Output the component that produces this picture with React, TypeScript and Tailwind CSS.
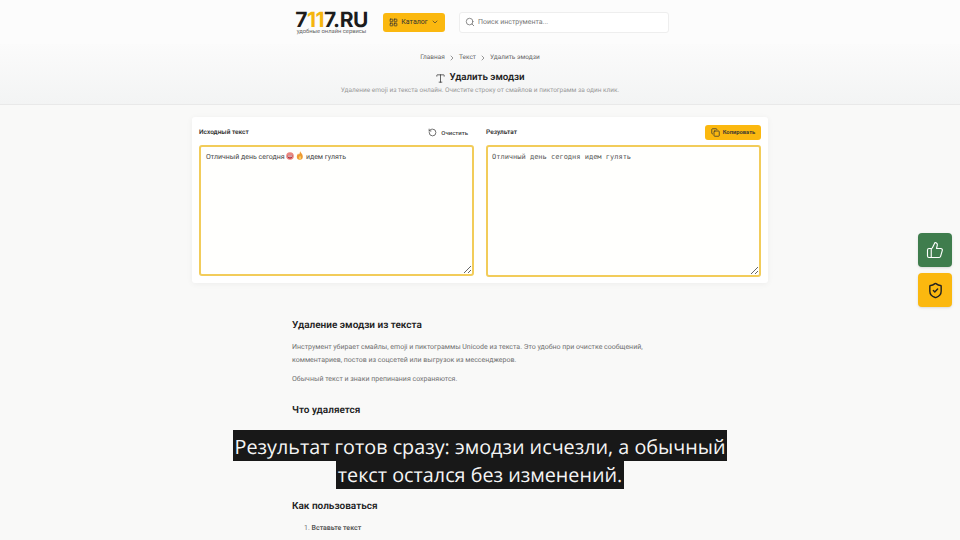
import { ChevronDown, ChevronRight, Copy, LayoutGrid, RotateCcw, Search, ShieldCheck, ThumbsUp, Type } from 'lucide-react';

const crumbs = ["Главная", "Текст", "Удалить эмодзи"];

function FaceEmoji() {
    return (
        <svg width="8" height="8" viewBox="0 0 20 20" className="inline-block align-[-1px]">
            <circle cx="10" cy="10" r="9.5" fill="#e9867f" />
            <path d="M4 9h12c0 5-3 8-6 8s-6-3-6-8z" fill="#8c2433" />
            <rect x="5" y="9" width="10" height="2.5" fill="#fff" />
            <ellipse cx="10" cy="15" rx="3" ry="1.6" fill="#f25f6c" />
        </svg>
    );
}

function FireEmoji() {
    return (
        <svg width="8" height="9" viewBox="0 0 20 22" className="inline-block align-[-1px]">
            <path d="M10 0c1 4 7 7 7 14a7.500 7.500 0 0 1-15 0c0-4 2-5 3-8 1 1 2 2 2 3 2-2 3-5 3-9z" fill="#ee9a32" />
            <path d="M10 11c1 2 3 3 3 6a3 3 0 0 1-6 0c0-2 2-3 3-6z" fill="#f9cf5c" />
        </svg>
    );
}

export default function App() {
    return (
        <div className="relative h-[540px] overflow-hidden bg-[#f9f9f8] font-['Roboto',sans-serif] text-[#222] [text-rendering:geometricPrecision]">
            <header className="flex h-[44px] items-center justify-center bg-[#fcfcfc] pl-[4px]">
                <div className="flex w-[374px] items-center">
                    <div className="mt-[6px] flex w-[73px] flex-col items-center">
                        <div className="font-['Inter',sans-serif] text-[21px] font-bold leading-[15px] tracking-[-0.5px] text-[#1c1c1c]">
                            7<span className="text-[#f5b50f]">11</span>7.RU
                        </div>
                        <div className="whitespace-nowrap text-[5.800px] leading-[9px] text-[#666]">удобные онлайн сервисы</div>
                    </div>
                    <button className="ml-[15px] flex h-[19px] w-[62px] items-center justify-center gap-[3px] rounded-[3px] bg-[#fbb80f] text-[7px] text-[#333]">
                        <LayoutGrid size={9} />
                        Каталог
                        <ChevronDown size={8} />
                    </button>
                    <div className="ml-[14px] flex h-[21px] w-[210px] items-center gap-[3px] rounded-[3px] border border-[#eeeeee] bg-white px-[5px] text-[7px] text-[#777]">
                        <Search size={10} />
                        Поиск инструмента...
                    </div>
                </div>
            </header>

            <section className="flex h-[61px] flex-col items-center border-b border-[#e9e9e9] bg-gradient-to-b from-[#fbfbfb] to-[#f3f4f4]">
                <nav className="mt-[9px] flex h-[9px] items-center gap-[3px] text-[6.500px] text-[#666]">
                    {crumbs.map((crumb, i) => (
                        <span key={crumb} className="flex items-center gap-[3px]">
                            {i > 0 && <ChevronRight size={8} />}
                            {crumb}
                        </span>
                    ))}
                </nav>
                <h1 className="mt-[10px] flex items-center gap-[3px] text-[9.750px] font-semibold leading-[12px]">
                    <Type size={11} strokeWidth={1.5} />
                    Удалить эмодзи
                </h1>
                <p className="mt-[2px] text-[6.500px] leading-[9px] text-[#999]">
                    Удаление emoji из текста онлайн. Очистите строку от смайлов и пиктограмм за один клик.
                </p>
            </section>

            <main className="mx-auto mt-[12px] flex w-[576px] gap-[12px] rounded-[3px] bg-white px-[7px] pb-[6px] pt-[7px] shadow-[0_1px_6px_rgba(0,0,0,0.05)]">
                <div className="flex-1">
                    <div className="flex h-[16px] items-center justify-between text-[6.500px]">
                        <span className="mt-[1px] font-semibold text-[#333]">Исходный текст</span>
                        <button className="mr-[6px] flex items-center gap-[4px] text-[6px] font-medium text-[#444]">
                            <RotateCcw size={9} />
                            Очистить
                        </button>
                    </div>
                    <div className="mt-[5px] h-[131px] resize overflow-auto rounded-[3px] border-2 border-[#f2cc5a] bg-[#fffffd] px-[5px] py-[4px] text-[7px] leading-[12px] text-[#444]">
                        Отличный день сегодня <FaceEmoji /> <FireEmoji /> идем гулять
                    </div>
                </div>
                <div className="flex-1">
                    <div className="flex h-[16px] items-center justify-between text-[6.500px]">
                        <span className="mt-[1px] font-semibold text-[#333]">Результат</span>
                        <button className="flex h-[15px] w-[56px] items-center justify-center gap-[3px] rounded-[3px] bg-[#fbb80f] text-[5.800px] font-semibold text-[#333]">
                            <Copy size={9} />
                            Копировать
                        </button>
                    </div>
                    <textarea
                        readOnly
                        value="Отличный день сегодня идем гулять"
                        className="mt-[5px] block h-[132px] w-full rounded-[3px] border-2 border-[#f2cc5a] bg-[#fffffd] px-[4px] py-[5px] font-['DejaVu_Sans_Mono',monospace] text-[7px] leading-[11px] text-[#555] outline-none"
                    />
                </div>
            </main>

            <article className="mx-auto mt-[37px] w-[376px] text-[7px] leading-[13px] text-[#707070]">
                <h2 className="text-[10px] font-semibold leading-[12px] text-[#222]">Удаление эмодзи из текста</h2>
                <p className="mt-[9px]">
                    Инструмент убирает смайлы, emoji и пиктограммы Unicode из текста. Это удобно при очистке сообщений, комментариев, постов из соцсетей или выгрузок из мессенджеров.
                </p>
                <p className="mt-[6px]">Обычный текст и знаки препинания сохраняются.</p>
                <h2 className="mt-[19px] text-[10px] font-semibold leading-[12px] text-[#222]">Что удаляется</h2>
                <h2 className="mt-[84px] text-[10px] font-semibold leading-[12px] text-[#222]">Как пользоваться</h2>
                <ol className="mt-[9px] list-inside list-decimal pl-[12px]">
                    <li><span className="font-semibold text-[#555]">Вставьте текст</span></li>
                </ol>
            </article>

            <div className="absolute right-[8px] top-[233px] flex flex-col gap-[6px]">
                <div className="flex h-[34px] w-[34px] items-center justify-center rounded-[4px] bg-[#3f7d4d] text-white shadow-sm">
                    <ThumbsUp size={18} strokeWidth={1.5} />
                </div>
                <div className="flex h-[34px] w-[34px] items-center justify-center rounded-[4px] bg-[#fbb80f] text-[#222] shadow-sm">
                    <ShieldCheck size={17} />
                </div>
            </div>

            <div className="absolute left-0 right-0 top-[430px] flex flex-col items-center font-['Open_Sans',sans-serif] text-[19.750px] leading-[28px] text-[#f5f5f5]">
                <span className="bg-[#181818] px-[2px] pt-[3px]">Результат готов сразу: эмодзи исчезли, а обычный</span>
                <span className="bg-[#181818] px-[2px]">текст остался без изменений.</span>
            </div>
        </div>
    );
}
